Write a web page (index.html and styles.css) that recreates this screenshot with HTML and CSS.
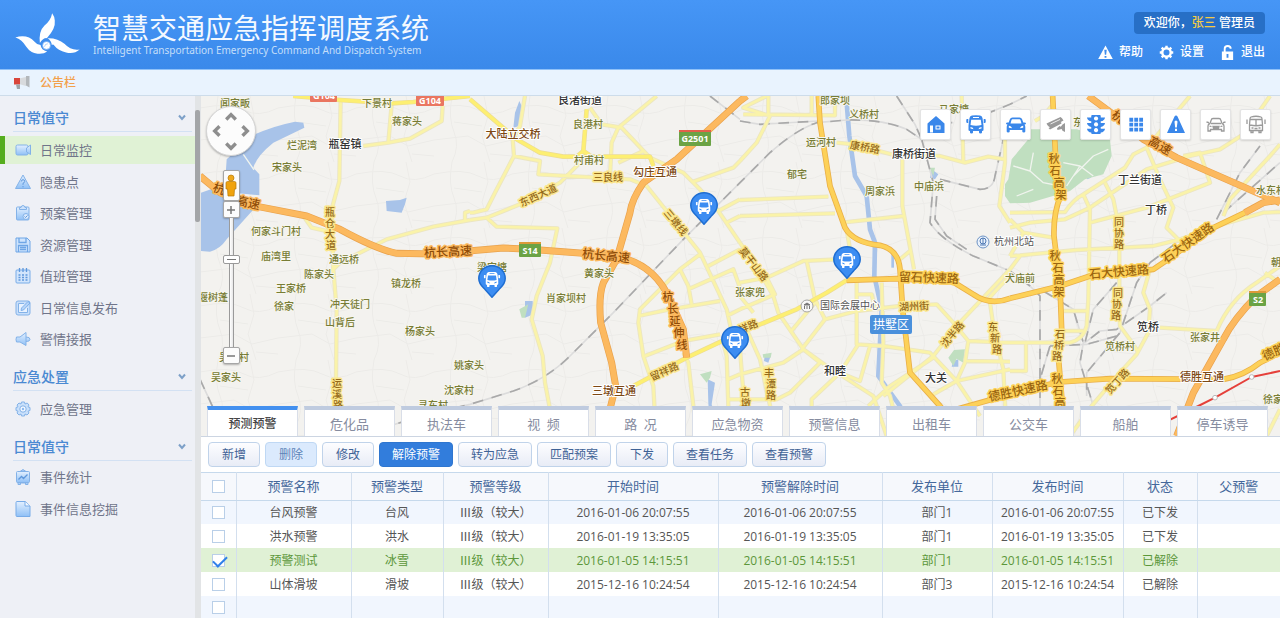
FILE: index.html
```html
<!DOCTYPE html>
<html lang="zh-CN">
<head>
<meta charset="utf-8">
<meta name="viewport" content="width=device-width, initial-scale=1">
<title>智慧交通应急指挥调度系统</title>
<link rel="stylesheet" href="styles.css">
</head>
<body>
<svg class="sprite" aria-hidden="true">
  <defs>
    <linearGradient id="blueFill" x1="0" y1="0" x2="0" y2="1"><stop offset="0" stop-color="#e3f0ff"/><stop offset="1" stop-color="#8fc0f6"/></linearGradient>
    <symbol id="bus" viewBox="0 0 20 18"><path fill-rule="evenodd" d="M6 0Q10-.5 14 0q2 .3 2.500 2.500L17.500 10v4.500q0 1-1.500 1V17q0 1-1.500 1T13 17v-1.500H7V17q0 1-1.500 1T4 17v-1.500q-1.500 0-1.500-1V10l1-7.500Q4 .3 6 0zM7 1.500v1h6v-1zM5.200 4.200L4.500 9.500Q10 10.800 15.500 9.500l-.7-5.300zM4.500 11.500v1.500l3 .7q0-1.700-3-2.200zM15.500 11.500v1.500l-3 .7q0-1.700 3-2.200zM1 3.500h1.300v4H1.500Q.300 7.500.300 6.500V4.500Q.300 3.500 1 3.500zM19 3.500h-1.300v4h.8q1.200 0 1.200-1V4.500q0-1-.7-1z"/></symbol>
    <symbol id="car" viewBox="0 0 20 18"><path fill-rule="evenodd" d="M6.500 2h7q2 0 2.600 1.800L17.300 7h1.200q1.500 0 1.500 1t-1.500 1q.8 1 .8 2.500V16q0 1-1.500 1T16.300 16v-1.500H3.700V16q0 1-1.500 1T.700 16v-4.500Q.700 10 1.500 9 0 9 0 8t1.500-1h1.200l1.200-3.200Q4.500 2 6.500 2zM6.500 3.700q-.8 0-1 .8L4.500 8h11l-1-3.500q-.2-.8-1-.8zM2.800 10.300v2l3 .5q0-2-3-2.500zM17.200 10.300v2l-3 .5q0-2 3-2.500z"/></symbol>
    <symbol id="chevron" viewBox="0 0 8 7"><path d="M1 1.500L4 5l3-3.500" fill="none" stroke="#7da0c8" stroke-width="2"/></symbol>
    <symbol id="pin" viewBox="0 0 28 33">
      <path d="M14 .8C6.500.8.800 6.500.800 13.500c0 6 4.200 8.500 6.700 11.500L14 32.300l6.500-7.300c2.500-3 6.700-5.500 6.700-11.500C27.200 6.500 21.500.800 14 .800z" fill="#3c8df2" stroke="#1f6ed2" stroke-width="1.500"/>
      <use href="#bus" x="5" y="7" width="18" height="15" fill="#fff"/>
    </symbol>
  </defs>
</svg>
<div class="app">
  <header class="topbar">
    <svg class="logo" viewBox="45 35 196 128" aria-hidden="true">
      <g fill="#fff"><path d="M157 38Q153 60 134 75Q116 92 120 128Q130 112 141 113Q168 85 165 60Q164 47 157 38z"/><path d="M46 111Q82 100 104 124Q112 134 122 134Q124 150 142 153Q132 162 113 160Q92 158 79 139Q66 117 46 111z"/><path d="M143 113Q174 112 194 130Q215 152 240 147Q223 162 199 156Q174 150 164 136Q159 129 156 134Q155 120 143 113z"/></g>
      <circle cx="140" cy="135" r="12" fill="#fff" stroke="#5fa3f5" stroke-width="2"/><path d="M134 139q1-9 10-9" fill="none" stroke="#8fbdf8" stroke-width="2"/>
    </svg>
    <div class="brand">
      <h1>智慧交通应急指挥调度系统</h1>
      <p>Intelligent Transportation Emergency Command And Dispatch System</p>
    </div>
    <div class="account">
      <div class="welcome">欢迎你，<b>张三</b> 管理员</div>
      <nav class="quick">
        <a href="#"><svg viewBox="0 0 16 16"><path fill="#fff" fill-rule="evenodd" d="M8 .5L15.800 15H.200zM6.700 5l.6 5.500h1.400L9.300 5zM7 11.700v1.800h2v-1.800z"/></svg>帮助</a>
        <a href="#"><svg viewBox="0 0 16 16"><circle cx="8" cy="8" r="4.500" fill="none" stroke="#fff" stroke-width="2.600"/><path d="M8 .8v3M8 12.200v3M.800 8h3M12.200 8h3M2.900 2.900l2 2M11.100 11.100l2 2M2.900 13.100l2-2M11.100 4.900l2-2" stroke="#fff" stroke-width="2.600"/></svg>设置</a>
        <a href="#"><svg viewBox="0 0 16 16"><path d="M5 8V4q0-3 3.200-3t3.200 3" fill="none" stroke="#fff" stroke-width="2"/><path fill="#fff" fill-rule="evenodd" d="M2 7h12v9H2zM7 9.500v4h2v-4z"/></svg>退出</a>
      </nav>
    </div>
  </header>
  <div class="notice">
    <svg viewBox="0 0 16 14" aria-hidden="true"><path d="M5 2.500L12 1v9L5 8z" fill="#d8dadd"/><path d="M0 2h6v6.500H0z" fill="#d9453b"/><path d="M12 0h3.500v11.500L12 9.500z" fill="#b3b7bb"/><path d="M2 8.500h4V13H3z" fill="#9fa4a9"/></svg>
    <span>公告栏</span>
  </div>
  <div class="body">
    <aside class="sidebar">
      <section>
        <h2>日常值守<svg><use href="#chevron"/></svg></h2>
        <ul class="menu menu-long">
          <li><a class="active" href="#"><svg viewBox="0 0 16 16"><g fill="url(#blueFill)" stroke="#83b2e8"><rect x="1" y="3" width="12" height="10" rx="1.500"/><path d="M11.500 6L15.500 3v9.500L11.500 10z"/></g></svg>日常监控</a></li>
          <li><a href="#"><svg viewBox="0 0 16 16"><path d="M8 1L15.500 14.500H.500z" fill="url(#blueFill)" stroke="#83b2e8"/><path d="M6.300 7.500q.2-1.800 1.800-1.800T9.700 7.500Q9.500 8.800 8 9.300v1.500M8 12v1.300" fill="none" stroke="#5f98dc"/></svg>隐患点</a></li>
          <li><a href="#"><svg viewBox="0 0 16 16"><g stroke="#83b2e8"><rect x="1.500" y="2" width="12.500" height="13" rx="1" fill="url(#blueFill)"/><path d="M4.500 4.500V2.500H6q.3-2 2-2t2 2h1.500v2z" fill="#cde2fc"/><circle cx="11" cy="11.500" r="3" fill="#d8e9fd"/></g><path d="M9.500 11.500l1 1 2-2" fill="none" stroke="#5f98dc"/></svg>预案管理</a></li>
          <li><a href="#"><svg viewBox="0 0 16 16"><path d="M1 1h11l3 3v11H1z" fill="#cfe4fd" stroke="#6fa6e6"/><path d="M4 1v4.500h7V1M3.500 15V8.500h9V15M5 10.500h6M5 12.500h6" fill="none" stroke="#6fa6e6" stroke-width="1.300"/></svg>资源管理</a></li>
          <li><a href="#"><svg viewBox="0 0 16 16"><rect x="1" y="2" width="14" height="13" rx="1" fill="#d2e5fc" stroke="#78ace8"/><path d="M4.500 0v4M8 0v4M11.500 0v4M3.500 7h2M7 7h2M10.500 7h2M3.500 9.500h2M7 9.500h2M10.500 9.500h2M3.500 12h2M7 12h2M10.500 12h2" stroke="#5f98dc" stroke-width="1.300"/></svg>值班管理</a></li>
          <li><a href="#"><svg viewBox="0 0 16 16"><rect x="1" y="1" width="14" height="14" rx="2" fill="#c8dffb" stroke="#83b2e8"/><path d="M9 3.500H3.500v9h9V8" fill="#e8f2ff" stroke="#83b2e8"/><path d="M6 10.500l.5-2.500L13 1.500l2 1.500-6.500 7z" fill="#b5d4f9" stroke="#6fa6e6" stroke-width=".8"/></svg>日常信息发布</a></li>
          <li><a href="#"><svg viewBox="0 0 16 16"><path d="M1.500 6H5l6-4.500V14.500L5 11H1.500Q.500 8.500 1.500 6zM11 6q4 0 4 2.300T11 10.500" fill="url(#blueFill)" stroke="#83b2e8"/></svg>警情接报</a></li>
        </ul>
      </section>
      <section>
        <h2>应急处置<svg><use href="#chevron"/></svg></h2>
        <ul class="menu">
          <li><a href="#"><svg viewBox="0 0 16 16"><path d="M6.500 1h3l.5 2 2.200-1 1.800 2-1 1.800 2 .7v3l-2 .7 1 1.800-2 2-2-1-.5 2h-3L6 13l-2 1-2-2 1-1.800L1 9.500v-3l2-.7L2 4l2-2 2 1z" fill="#c9e0fb" stroke="#83b2e8"/><circle cx="8" cy="8" r="3.200" fill="#f1f7ff" stroke="#83b2e8"/><circle cx="8" cy="8" r="1.200" fill="#8dbaf0"/></svg>应急管理</a></li>
        </ul>
      </section>
      <section>
        <h2>日常值守<svg><use href="#chevron"/></svg></h2>
        <ul class="menu menu-last">
          <li><a href="#"><svg viewBox="0 0 16 16"><path d="M5 2.500L8 .5l3 2M3 13v2.500h2.500V14h5v1.500H13V13" fill="#a9cdf7" stroke="#83b2e8"/><rect x="1.500" y="2.500" width="13" height="11" rx="1" fill="url(#blueFill)" stroke="#83b2e8"/><path d="M3.500 10.500l3-3 2 2 4-4" fill="none" stroke="#5f98dc" stroke-width="1.300"/></svg>事件统计</a></li>
          <li><a href="#"><svg viewBox="0 0 16 16"><path d="M2 .500h8.500L15 5v10.500H2q-1 0-1-1v-13q0-1 1-1z" fill="url(#blueFill)" stroke="#78ace8"/><path d="M10 .5V5h5" fill="#f3f8ff" stroke="#78ace8"/></svg>事件信息挖掘</a></li>
        </ul>
      </section>
      <span class="scroll-thumb"></span>
    </aside>
    <main class="main">
      <div class="map-area">
        <svg class="map" viewBox="1 0 1079 341" preserveAspectRatio="xMinYMin slice" role="img" aria-label="杭州地图">
          <defs>
            <pattern id="lanes" width="78" height="66" patternUnits="userSpaceOnUse"><path d="M0 12Q30 6 44 14T78 12M18 0Q14 22 20 36T18 66M0 44L34 40L52 50L78 44M50 0L54 20L48 40L56 66M20 26L48 30M56 58L78 60" fill="none" stroke="#ecebe8" stroke-width="1"/></pattern>
            <g id="minor">
              <path d="M422 10L418 255L395 340L400 520L410 640L408 850L415 1020M575 25L565 140L630 128L725 75L728 30M490 150L565 140M395 525L420 500L560 430L700 392L810 372M310 360L335 395L400 410M795 372V350L810 345"/>
              <path transform="translate(810 0)" d="M165 0L150 90L128 130L132 180L210 195L205 235L480 250L530 270L590 345L690 470L770 640L790 730M132 180L75 290L50 340L10 350H0M0 372L50 365L150 325L270 260L330 200L345 165M50 365L80 392L262 397L240 500L200 600L185 670L218 780L225 860L255 1020M560 0L445 95L425 140L420 240M360 35L395 85L455 95L540 185L640 230L690 280L745 345L810 440M445 200L520 165M670 257L790 215L810 195M745 345L810 310M770 380L810 360M690 475L630 520L510 640L505 680L520 780L550 870L558 1020M505 660L600 640L750 615M630 520L655 570L665 625M655 580L790 520L810 575M715 510L810 460M525 780L640 735L750 715M640 770L655 800L670 930L680 1020M760 740L770 780L778 1020M775 850L810 835M775 910H810M770 660L810 640"/>
              <path transform="translate(1620 0)" d="M0 195L50 140L90 60L10 35L80 0M10 55L285 58V0M85 55V0M215 0V55M0 312L265 302M0 360L285 352M305 380L490 360M290 140L340 145L455 175L600 180L675 200L745 182L795 190M487 190V330L515 480L522 520M665 0L670 200M795 60V200L778 330L810 380M320 400L330 460M0 560L80 545L190 495L290 490M0 440L60 530L100 600L115 650L190 760L260 810L400 900L440 1020M200 495L225 610L255 670L350 645L480 630L590 625L640 680L685 735L675 800L650 855M80 545L105 595L0 640M0 600L40 650M350 555V745L430 750L570 770L650 855L720 960M0 835L130 800L190 760M150 710L225 620M185 760L255 670M425 560L430 740L425 860L450 900L480 1020M350 595H395L405 640M430 900L580 780L650 690L810 520M215 1020V910L300 830L355 745M385 930L450 870L580 785M685 735L810 740M680 795L810 797M580 895L650 855L810 820M750 620L760 690L790 820L800 1020M745 610Q760 590 810 540M0 910H110L150 890L240 800L190 760M20 700L60 790L110 1020M0 760L20 1020M480 490L510 465M300 830L360 855L390 750"/>
              <path transform="translate(2430 0)" d="M0 350L165 348Q190 310 220 295L345 215L370 175L410 155M0 395L60 380L165 370L240 335L410 220L540 180L630 160L700 115L780 0M240 380L410 335L600 260L570 170L520 180M410 155L450 250L490 335L470 395L515 440M410 155L540 0M285 260L310 310L328 400V640L330 690L370 745L385 770M220 295L240 340L235 610L230 690Q220 730 180 740L0 740M0 480L30 478L200 462L430 450L510 430L600 400M0 370L40 410L130 425M40 410L0 480M0 520L30 480M420 520L400 590L420 640L415 710L380 775L330 830L245 930L180 1020M155 645H230M155 705H220M450 695L620 705Q660 610 740 560L810 510M765 530L800 555M0 825H48V745M515 440L620 390L760 350L810 348M640 360L660 310L780 180L810 145M75 75L100 60L125 30M770 1020L810 940"/>
            </g>
            <g id="major">
              <path d="M280 0L420 12L575 22L640 18L810 0M810 10L950 130L1020 170L1090 182H1350L1360 210M1160 40L1150 165L1175 182M1150 165L1130 182M1300 870L1460 785L1620 710L1790 640L1880 590L1940 553"/>
            </g>
            <g id="express">
              <path transform="translate(1620 0)" d="M235 0L240 80L270 270L315 395Q340 440 420 448Q475 460 480 520L488 640L510 830L600 930L670 1020M320 553L470 548L640 558L700 595Q750 630 810 607M650 940L810 895"/>
              <path transform="translate(2430 0)" d="M0 607L150 570L240 540L430 520L460 500L600 400L705 350M128 0L140 250L152 300Q130 350 132 420L150 570L155 700L145 780L155 900L165 1020M0 890L150 858L300 848L640 850Q700 840 750 800L810 770"/>
            </g>
            <g id="motorway">
              <path d="M0 240L60 290L140 325L320 360L420 400Q530 460 590 472L700 474L910 456L990 460L1150 472L1250 482Q1350 500 1400 590L1450 700L1460 785M1620 15L1430 190L1330 260Q1295 310 1290 350L1250 490L1210 560Q1195 600 1202 680L1235 800L1247 870L1210 1020M1620 15L1640 0"/>
              <path transform="translate(2430 0)" d="M235 0L330 70L400 130L500 185L740 290L810 320M705 350L760 320L810 312M810 550L740 600Q670 670 640 730L550 890L500 1020"/>
            </g>
            <g id="rail">
              <path d="M0 850L60 980M540 1000L660 960L810 925L940 885Q1040 850 1110 780L1240 650L1450 430L1620 260L1710 170Q1790 100 1850 80L1940 72Q2050 70 2120 100L2165 130L2200 260L2190 380Q2220 430 2320 480L2430 525L2490 570L2520 600V930M1620 75L1680 85L1855 75M2090 0L2145 85L2165 130M2165 80H2260M2220 250L2340 280Q2380 280 2385 240L2410 130M2210 300L2205 370L2240 420L2300 460M1530 0L1620 70M2355 55L2430 25L2480 0"/>
              <path transform="translate(2430 0)" d="M100 585L190 640L220 740L210 800L250 930L280 1020M320 560L250 640L225 740L270 705L320 700L420 630L470 590M420 500L380 560L350 650L330 710L230 830V900M420 500L500 440M620 370L690 230L750 150M640 350L810 200M120 750L230 745L320 720M120 750L90 850"/>
            </g>
          </defs>
          <rect x="0" width="1080" height="341" fill="#f3f2ef"/>
          <rect x="0" width="1080" height="341" fill="url(#lanes)"/>
          <g transform="scale(.33333)">
            <g class="water"><path d="M313 95L310 80L285 77Q220 90 165 115L80 190L75 265L3 290V465L30 467Q60 460 80 430L165 335L100 290L178 298V235L160 215Q170 180 220 140zM558 315L600 312L620 305L615 325L605 350L560 345zM958 15L945 50L940 95L958 90L965 30zM975 615L998 615L1000 655L975 665zM1523 850L1545 860L1535 925L1550 1000H1530L1525 920zM1695 775L1712 780L1705 800L1692 795zM2260 795L2275 790V812H2255zM2195 220L2215 235L2205 250L2190 245zM2655 228L2668 225L2673 245L2662 250z"/></g>
            <g class="park"><path d="M2485 100L2630 100L2730 130L2735 180L2710 235L2655 250L2610 285L2490 320L2430 322L2415 300V265L2425 250L2435 190L2485 130zM958 640L985 625L975 665L965 665zM1500 835L1535 825L1530 845L1520 860zM2245 785L2262 762L2295 760L2290 800L2270 788L2260 810zM1688 775L1715 770L1712 785L1690 785zM2188 215L2205 215L2200 240z"/></g>
            <path class="trails" d="M2440 210L2490 225L2530 260L2580 270M2490 225L2500 170M2580 110L2560 160M2620 240L2680 180L2725 160M2600 270L2640 210M2450 300L2500 280M2590 200L2640 210L2680 240M130 175L162 222"/>
            <path class="river" d="M1940 20L1948 120L1965 240L2000 300L2010 400L2025 440L2023 540L2045 640L2035 840L2100 930L2130 1020"/><path class="creek" d="M2078 470V515"/>
            <use class="rail-base" href="#rail"/><use class="rail-dash" href="#rail"/>
            <use class="minor-case" href="#minor"/><use class="minor-fill" href="#minor"/>
            <use class="major-case" href="#major"/><use class="major-fill" href="#major"/>
            <use class="express-case" href="#express"/><use class="express-fill" href="#express"/>
            <use class="motorway-case" href="#motorway"/><use class="motorway-fill" href="#motorway"/>
            <path class="metro" d="M2830 1010L2995 930L3045 905L3155 843L3240 825"/>
            <g class="metro-stop"><circle cx="3045" cy="905" r="7"/><circle cx="3155" cy="843" r="7"/></g>
          </g>
          <g class="village">
            <text x="35" y="11">闻家畈</text><text x="177" y="11">下景村</text><text x="207" y="29">蒋家头</text><text x="102" y="53">烂泥湾</text><text x="87" y="75">宋家头</text><text x="76" y="139">何家斗门村</text><text x="76" y="164">庙湾里</text><text x="144" y="167">通远桥</text><text x="119" y="182">陈家头</text><text x="91" y="196">王家桥</text><text x="206" y="191">镇龙桥</text><text x="84" y="214">徐家</text><text x="150" y="212">冲天徒门</text><text x="140" y="230">山背后</text><text x="220" y="239">杨家头</text><text x="13" y="205">堰树蓬</text><text x="269" y="273">姚家头</text><text x="259" y="298">沈家村</text><text x="26" y="285">吴家头</text><text x="34" y="265">吴家村</text><text x="233" y="313">寻东村</text>
            <text x="388" y="32">良港村</text><text x="389" y="68">村甫村</text><text x="399" y="181">黄家头</text><text x="366" y="206">肖家坝村</text><text x="292" y="175">梁家塘</text>
            <text x="635" y="8">郎家坝</text><text x="664" y="22">义桥村</text><text x="621" y="50">运河村</text><text x="597" y="82">郁宅</text><text x="680" y="99">周家浜</text><text x="729" y="94">中庙浜</text><text x="550" y="200">张家兜</text><text x="754" y="17">马家塘</text><text x="820" y="186">犬庙前</text>
            <text x="1071" y="98">水东村</text><text x="1005" y="245">张家井</text><text x="920" y="254">笕桥村</text><text x="1073" y="307">徐家</text><text x="1076" y="170">朝</text><text x="878" y="30">东</text>
          </g>
          <g class="town">
            <text x="145" y="52">瓶窑镇</text><text x="380" y="8">良渚街道</text><text x="714" y="62">康桥街道</text><text x="940" y="88">丁兰街道</text><text x="956" y="118">丁桥</text><text x="948" y="235">笕桥</text><text x="635" y="279">和睦</text><text x="736" y="286">大关</text>
          </g>
          <g class="poi"><text x="814" y="149">杭州北站</text><text x="650" y="213">国际会展中心</text></g>
          <g class="junction"><text x="313" y="42">大陆立交桥</text><text x="455" y="80">勾庄互通</text><text x="414" y="299">三墩互通</text><text x="1002" y="285">德胜互通</text></g>
          <g class="road">
            <text x="408" y="85">三良线</text><text x="338" y="103" transform="rotate(-25 338 99)">东西大道</text><text x="476" y="130" transform="rotate(50 476 126)">三墩线</text><text x="464" y="279" transform="rotate(-24 464 275)">留祥路</text><text x="554" y="172" transform="rotate(52 554 168)">莫干山路</text><text x="548" y="234" transform="rotate(-22 548 230)">祥路</text><text x="665" y="55" transform="rotate(10 665 51)">康桥路</text><text x="714" y="214" transform="rotate(-3 714 210)">湖州街</text><text x="752" y="242" transform="rotate(-50 752 238)">沈半路</text><text x="917" y="289" transform="rotate(-48 917 285)">笕丁路</text>
            <text><tspan x="130" y="120">瓶</tspan><tspan x="130" y="131">仓</tspan><tspan x="130" y="142">大</tspan><tspan x="131" y="153">道</tspan></text>
            <text><tspan x="137" y="291">运</tspan><tspan x="137" y="302">溪</tspan><tspan x="138" y="313">路</tspan></text>
            <text><tspan x="793" y="235">东</tspan><tspan x="795" y="246">新</tspan><tspan x="797" y="257">路</tspan></text>
            <text><tspan x="569" y="281">丰</tspan><tspan x="571" y="292">潭</tspan><tspan x="571" y="303">路</tspan></text>
            <text><tspan x="545" y="300">古</tspan><tspan x="546" y="311">墩</tspan></text>
            <text><tspan x="919" y="130">同</tspan><tspan x="919" y="141">协</tspan><tspan x="919" y="152">路</tspan></text>
            <text><tspan x="918" y="201">同</tspan><tspan x="917" y="212">协</tspan><tspan x="916" y="223">路</tspan></text>
            <text><tspan x="860" y="242">石</tspan><tspan x="859" y="253">桥</tspan><tspan x="857" y="264">路</tspan></text>
          </g>
          <g class="road road-express">
            <text x="729" y="186" transform="rotate(2 729 182)">留石快速路</text><text x="919" y="180" transform="rotate(-5 919 176)">石大快速路</text><text x="988" y="151" transform="rotate(-35 988 147)">石大快速路</text><text x="818" y="299" transform="rotate(-12 818 295)">德胜快速路</text><text x="1074" y="260" transform="rotate(-25 1074 256)">德胜</text>
            <g class="stacked">
              <text><tspan x="854" y="67">秋</tspan><tspan x="855" y="79">石</tspan><tspan x="859" y="91">高</tspan><tspan x="861" y="103">架</tspan></text>
              <text><tspan x="855" y="164">秋</tspan><tspan x="858" y="176">石</tspan><tspan x="859" y="188">高</tspan><tspan x="859" y="200">架</tspan></text>
              <text><tspan x="857" y="287">秋</tspan><tspan x="858" y="299">石</tspan><tspan x="860" y="311">高</tspan></text>
            </g>
          </g>
          <g class="road road-motorway">
            <text x="248" y="160" transform="rotate(-3 248 156)">杭长高速</text><text x="406" y="164" transform="rotate(6 406 160)">杭长高速</text><text x="19" y="97" transform="rotate(20 19 93)">杭</text><text x="48" y="111" transform="rotate(12 48 107)">高速</text><text x="960" y="54" transform="rotate(30 960 50)">高速</text><text x="918" y="25" transform="rotate(35 918 21)">杭</text>
            <g class="stacked"><text><tspan x="468" y="205">杭</tspan><tspan x="473" y="217">长</tspan><tspan x="475" y="229">延</tspan><tspan x="479" y="241">伸</tspan><tspan x="482" y="253">线</tspan></text></g>
          </g>
          <g class="shield">
            <rect x="110" y="-8" width="27" height="14" rx="1" fill="#ea7660"/><text x="124" y="3">G104</text>
            <rect x="216" y="-4" width="28" height="14" rx="1" fill="#ea7660"/><text x="230" y="8">G104</text>
            <rect x="479" y="34" width="32" height="16" rx="1" fill="#6ba345"/><path d="M479 34h32v2h-32z" fill="#e2604b"/><text x="495" y="46">G2501</text>
            <rect x="319" y="146" width="22" height="15" rx="1" fill="#6ba345"/><path d="M319 146h22v2h-22z" fill="#dc9a3a"/><text x="330" y="158">S14</text>
            <rect x="1049" y="195" width="17" height="15" rx="1" fill="#6ba345"/><path d="M1049 195h17v2h-17z" fill="#dc9a3a"/><text x="1058" y="207">S2</text>
          </g>
          <rect x="670" y="219" width="42" height="19" rx="2" fill="#4a90dc"/><text class="district" x="691" y="233">拱墅区</text>
          <circle cx="607" cy="210" r="6" fill="#f8f8f8" stroke="#a5a5a5"/><path d="M604 209l3-2 3 2zM604.500 213v-3M607 213v-3M609.500 213v-3" fill="#777" stroke="#777"/>
          <circle cx="783" cy="146" r="6" fill="#eaf2fc" stroke="#6d93c4"/><circle cx="783" cy="145" r="3" fill="none" stroke="#4c78b4"/><path d="M783 142v6M780 149h6" stroke="#4c78b4"/>
          <use href="#pin" x="278" y="169" width="28" height="33"/><use href="#pin" x="490" y="96" width="28" height="33"/><use href="#pin" x="633" y="150" width="28" height="33"/><use href="#pin" x="521" y="230" width="28" height="33"/>
        </svg>
        <div class="map-nav">
          <button class="pan" type="button" aria-label="平移地图"><svg viewBox="0 0 50 50"><path d="M20 13l5-5 5 5M20 38l5 5 5-5M13 20l-5 5 5 5M37 20l5 5-5 5" fill="none" stroke="#8e8e8e" stroke-width="3.500"/></svg></button>
          <button class="pegman" type="button" aria-label="街景"><svg viewBox="0 0 12 24"><circle cx="6" cy="4" r="3" fill="#f0a91c" stroke="#b87a08" stroke-width=".7"/><path d="M2.500 7.500h7q1.500 0 1.500 1.500v6H9.500l-.5 7H3l-.5-7H1V9q0-1.500 1.500-1.500z" fill="#f0a30e" stroke="#b87a08" stroke-width=".7"/></svg></button>
          <button class="zoom-in" type="button" aria-label="放大"><svg viewBox="0 0 8 8"><path d="M4 0v8M0 4h8" stroke="#777" stroke-width="1.500"/></svg></button>
          <input class="zoom-range" type="range" min="0" max="100" value="69" aria-label="缩放级别">
          <button class="zoom-out" type="button" aria-label="缩小"><svg viewBox="0 0 8 8"><path d="M0 4h8" stroke="#777" stroke-width="1.500"/></svg></button>
        </div>
        <div class="layers">
          <button type="button" aria-label="场站"><svg viewBox="0 0 20 18"><path fill-rule="evenodd" d="M10 .5L18.500 8v9.500h-17V8zM4 10v7h3v-7zM9.500 10v4h5v-4z"/><path d="M10.500 11h3v2h-3z"/></svg></button>
          <button type="button" aria-label="公交"><svg><use href="#bus"/></svg></button>
          <button type="button" aria-label="出租车"><svg><use href="#car"/></svg></button>
          <button class="off" type="button" aria-label="摄像头"><svg viewBox="0 0 20 18"><path d="M.500 8L14.500 1.500Q16 2 17.500 5L5 12Q2 11.500.500 8zM2.500 12.500L15 6.500l.5 1.500L4 14zM16.500 9l2.500-1.500V16.500l-2.500-1.200-.8-1.800-4.200 1L11 12.800l2.500-2.300 1.300.8z"/><path d="M4.500 8.500L14 4" stroke="#fff" stroke-width=".8"/></svg></button>
          <button type="button" aria-label="信号灯"><svg viewBox="0 0 20 20"><path fill-rule="evenodd" d="M5 1q0-1 1-1h8q1 0 1 1v1.500h4.500Q19 6 15 6.500V8.500h4.500Q19 12 15 12.500v2h4.500Q19 18 15 18.500v.5q0 1-1 1H6q-1 0-1-1v-.5Q1 18 .500 14.500H5v-2Q1 12 .500 8.500H5v-2Q1 6 .500 2.500H5zM10 1.500a2.200 2.200 0 1 0 .1 0zM10 7.700a2.200 2.200 0 1 0 .1 0zM10 13.800a2.200 2.200 0 1 0 .1 0z"/></svg></button>
          <button type="button" aria-label="网格"><svg viewBox="0 0 20 20"><path d="M3 3h4v4H3zM8.200 3h4v4h-4zM13.400 3h4v4h-4zM3 8.200h4v4H3zM8.200 8.200h4v4h-4zM13.400 8.200h4v4h-4zM3 13.400h4v4H3zM8.200 13.400h4v4h-4zM13.400 13.400h4v4h-4z"/></svg></button>
          <button type="button" aria-label="隐患"><svg viewBox="0 0 20 18"><path fill-rule="evenodd" d="M10 0q1 0 1.500 1L19 17.500H1L8.500 1Q9 0 10 0zM10 5Q8.300 5 8.500 6.500L9.200 12h1.600l.7-5.500Q11.700 5 10 5zM9 13.300v2.200h2v-2.200z"/></svg></button>
          <button class="off" type="button" aria-label="离线车辆"><svg viewBox="0 0 20 18"><g fill="none" stroke="#9a9a9a" stroke-width="1.300"><path d="M4 8l1.200-3.500Q5.500 3 7 3h6q1.500 0 1.800 1.500L16 8q2 .5 2 2.500V15.500h-2.500V14h-11v1.500H2v-5Q2 8.500 4 8zM5 8h10M.500 6.500l2.500.7M19.500 6.500l-2.500.7M7 11h6l-.5 1.500h-5zM3.500 10.500l2 .7M16.500 10.500l-2 .7"/></g></svg></button>
          <button class="off" type="button" aria-label="离线公交"><svg viewBox="0 0 20 18"><g fill="none" stroke="#9a9a9a" stroke-width="1.300"><path d="M5 1.500Q10 0 15 1.500q1 .5 1 2l.5 6V15h-13V9.500l.5-6q0-1.500 1-2zM4 4h12M4 9.500Q10 11 16 9.500M10 4v6M1 4v4.500M19 4v4.500M5 15v2h2v-2M13 15v2h2v-2M5.500 12.500h2M12.500 12.500h2M8.500 13h3"/></g></svg></button>
        </div>
        <div class="tabs" role="tablist">
          <button role="tab" aria-selected="true">预测预警</button><button role="tab">危化品</button><button role="tab">执法车</button><button role="tab">视&ensp;频</button><button role="tab">路&ensp;况</button><button role="tab">应急物资</button><button role="tab">预警信息</button><button role="tab">出租车</button><button role="tab">公交车</button><button role="tab">船舶</button><button role="tab">停车诱导</button>
        </div>
      </div>
      <div class="toolbar">
        <button type="button">新增</button><button class="hover" type="button">删除</button><button type="button">修改</button><button class="wide primary" type="button">解除预警</button><button class="wide" type="button">转为应急</button><button class="wide" type="button">匹配预案</button><button type="button">下发</button><button class="wide" type="button">查看任务</button><button class="wide" type="button">查看预警</button>
      </div>
      <table>
        <colgroup><col class="c-check"><col class="c-name"><col class="c-type"><col class="c-level"><col class="c-start"><col class="c-end"><col class="c-dept"><col class="c-pub"><col class="c-state"><col class="c-parent"></colgroup>
        <thead><tr><th><input type="checkbox" aria-label="全选"></th><th>预警名称</th><th>预警类型</th><th>预警等级</th><th>开始时间</th><th>预警解除时间</th><th>发布单位</th><th>发布时间</th><th>状态</th><th>父预警</th></tr></thead>
        <tbody>
          <tr><td><input type="checkbox" aria-label="台风预警"></td><td>台风预警</td><td>台风</td><td>Ⅲ级（较大）</td><td>2016-01-06 20:07:55</td><td>2016-01-06 20:07:55</td><td>部门1</td><td>2016-01-06 20:07:55</td><td>已下发</td><td></td></tr>
          <tr><td><input type="checkbox" aria-label="洪水预警"></td><td>洪水预警</td><td>洪水</td><td>Ⅲ级（较大）</td><td>2016-01-19 13:35:05</td><td>2016-01-19 13:35:05</td><td>部门1</td><td>2016-01-19 13:35:05</td><td>已下发</td><td></td></tr>
          <tr class="selected"><td><input type="checkbox" checked aria-label="预警测试"></td><td>预警测试</td><td>冰雪</td><td>Ⅲ级（较大）</td><td>2016-01-05 14:15:51</td><td>2016-01-05 14:15:51</td><td>部门1</td><td>2016-01-05 14:15:51</td><td>已解除</td><td></td></tr>
          <tr><td><input type="checkbox" aria-label="山体滑坡"></td><td>山体滑坡</td><td>滑坡</td><td>Ⅲ级（较大）</td><td>2015-12-16 10:24:54</td><td>2015-12-16 10:24:54</td><td>部门3</td><td>2015-12-16 10:24:54</td><td>已解除</td><td></td></tr>
          <tr class="spare"><td><input type="checkbox" aria-label="空行"></td><td></td><td></td><td></td><td></td><td></td><td></td><td></td><td></td><td></td></tr>
        </tbody>
      </table>
    </main>
  </div>
</div>
</body>
</html>
```
FILE: styles.css
```css
* { box-sizing: border-box; }
body {
  margin: 0;
  font-family: "Open Sans", "Noto Sans CJK SC", sans-serif;
  font-size: 12px;
  line-height: 16px;
  color: #555;
}
h1, h2, p, ul { margin: 0; padding: 0; font-weight: 400; }
ul { list-style: none; }
a { color: inherit; text-decoration: none; }
button { font: inherit; padding: 0; cursor: pointer; }
svg { display: block; flex: none; }
.sprite { position: absolute; width: 0; height: 0; }

.app { display: flex; flex-direction: column; min-height: 100vh; }

/* Header */
.topbar {
  display: flex;
  height: 70px;
  padding: 12px 15px 0;
  background: linear-gradient(#4696f6, #3a89ea);
  border-bottom: 1px solid #8fc1f8;
  color: #fff;
}
.logo { width: 65px; height: 43px; }
.brand { flex: 1; padding-left: 13px; white-space: nowrap; }
.brand h1 { font-size: 28px; line-height: 32px; color: #f4f9ff; }
.brand p { font-family: "Noto Sans", sans-serif; font-size: 10px; line-height: 12px; color: #c4def9; }
.account { display: flex; flex-direction: column; align-items: flex-end; gap: 10px; }
.welcome {
  padding: 3px 10px;
  border-radius: 4px;
  background: #276fc6;
  font-weight: 500;
  white-space: nowrap;
}
.welcome b { font-weight: 500; color: #f5cb45; }
.quick { display: flex; gap: 16px; font-weight: 500; }
.quick a { display: flex; align-items: center; gap: 6px; }
.quick svg { width: 15px; height: 15px; }

.notice {
  display: flex;
  align-items: center;
  gap: 10px;
  height: 26px;
  padding-left: 14px;
  background: #e9f3fe;
  border-bottom: 1px solid #cddcea;
  color: #f3a04b;
  font-weight: 500;
}
.notice svg { width: 16px; height: 14px; }

.body { flex: 1; display: flex; }

/* Sidebar */
.sidebar {
  position: relative;
  flex: none;
  width: 201px;
  padding: 8px 9px 0 0;
  background: #eef0f6;
  border-right: 6px solid #e2e4e6;
}
.sidebar section { margin-bottom: 10px; }
.sidebar h2 {
  display: flex;
  align-items: center;
  justify-content: space-between;
  height: 28px;
  margin: 0 -6px 4px 13px;
  padding-right: 6px;
  border-bottom: 1px solid #d3e1f3;
  font-size: 14px;
  font-weight: 500;
  color: #4a89d2;
}
.sidebar h2 svg { width: 8px; height: 7px; }
.menu { display: flex; flex-direction: column; gap: 4px; margin-right: -9px; }
.menu-long { height: 217px; gap: 0; justify-content: space-between; }
.menu-last { margin-top: -2px; }
.menu a {
  display: flex;
  align-items: center;
  gap: 9px;
  height: 28px;
  padding-left: 10px;
  border-left: 5px solid transparent;
  font-size: 13px;
  color: #70758a;
}
.menu svg { width: 16px; height: 16px; }
.menu .active { background: #e0f2d5; border-left-color: #55ad1e; }
.scroll-thumb {
  position: absolute;
  top: 14px;
  right: -5px;
  width: 5px;
  height: 112px;
  border-radius: 2px;
  background: #a3a5a8;
}

/* Map */
.main { flex: 1; min-width: 0; display: flex; flex-direction: column; background: #fff; }
.map-area { position: relative; flex: 1; min-height: 300px; overflow: hidden; border-bottom: 1px solid #ccd5e2; }
.map { position: absolute; inset: 0; width: 100%; height: 100%; }
.map use, .river, .creek, .trails, .metro { stroke-linejoin: round; }
.water { fill: #a8c3e9; }
.park { fill: #c0dfc0; }
.trails { fill: none; stroke: #f0f4ee; stroke-width: 4; }
.river { fill: none; stroke: #a8c3e9; stroke-width: 14; }
.creek { fill: none; stroke: #a8c3e9; stroke-width: 8; }
.rail-base { fill: none; stroke: #dcdcdc; stroke-width: 5; }
.rail-dash { fill: none; stroke: #a9a9a9; stroke-width: 5; stroke-dasharray: 32 26; }
.minor-case { fill: none; stroke: #ebe5c2; stroke-width: 13; }
.minor-fill { fill: none; stroke: #faf3a9; stroke-width: 8; }
.major-case { fill: none; stroke: #ecdc94; stroke-width: 14; }
.major-fill { fill: none; stroke: #fdef72; stroke-width: 10; }
.express-case { fill: none; stroke: #eab048; stroke-width: 17; }
.express-fill { fill: none; stroke: #fdd158; stroke-width: 12; }
.motorway-case { fill: none; stroke: #e9a24c; stroke-width: 21; }
.motorway-fill { fill: none; stroke: #fcb95f; stroke-width: 17; }
.metro { fill: none; stroke: #e5403a; stroke-width: 6; }
.metro-stop { fill: #fff; stroke: #b9b9b9; stroke-width: 3; }
.map text { text-anchor: middle; paint-order: stroke; stroke-linejoin: round; font-size: 10px; }
.map .village text { font-weight: 500; fill: #777c35; stroke: #f7f6ee; stroke-width: 2px; }
.map .town text { font-size: 11px; font-weight: 500; fill: #333; stroke: #fff; stroke-width: 2px; }
.map .poi text { fill: #555; stroke: #fff; stroke-width: 2px; }
.map .junction text { font-size: 11px; font-weight: 500; fill: #7d4814; stroke: #fff; stroke-width: 2px; }
.map .road text { font-weight: 500; fill: #94691a; stroke: #fbe68c; stroke-width: 3px; }
.map .road-express text { font-size: 12px; fill: #9a6510; stroke: #fdd158; }
.map .road-motorway text { font-size: 12px; fill: #8e4c08; stroke: #fcb95f; }
.map .stacked text { font-size: 11px; }
.map .shield text { font-size: 9px; font-weight: 700; fill: #fff; }
.map .district { font-size: 12px; fill: #fff; }

.map-nav {
  position: absolute;
  left: 5px;
  top: 10px;
  display: flex;
  flex-direction: column;
  align-items: center;
  width: 50px;
}
.map-nav button {
  display: flex;
  align-items: center;
  justify-content: center;
  width: 17px;
  height: 17px;
  border: 1px solid #a6a6a6;
  border-radius: 2px;
  background: #fcfcfc;
  box-shadow: 0 1px 2px #0004;
}
.map-nav .zoom-in svg, .map-nav .zoom-out svg { width: 8px; height: 8px; }
.map-nav .pan { width: 50px; height: 50px; margin-bottom: 14px; border-color: #d5d5d5; border-radius: 50%; }
.pan svg { width: 48px; height: 48px; }
.map-nav .pegman { height: 31px; }
.pegman svg { width: 12px; height: 24px; }
.zoom-range {
  appearance: none;
  writing-mode: vertical-lr;
  direction: rtl;
  width: 17px;
  height: 129px;
  margin: 0;
  background: linear-gradient(90deg, transparent 6px, #9a9a9a 6px, #9a9a9a 7px, #fff 7px, #e8e8e8 10px, #9a9a9a 10px, #9a9a9a 11px, transparent 11px);
}
.zoom-range::-webkit-slider-thumb {
  appearance: none;
  width: 17px;
  height: 9px;
  border: 1px solid #999;
  border-radius: 2px;
  background: linear-gradient(#fff 3px, #777 3px, #777 4px, #fff 4px) center / 9px 7px no-repeat #fff;
}

.layers { position: absolute; top: 13px; right: 9px; display: flex; gap: 9px; }
.layers button {
  display: flex;
  align-items: center;
  justify-content: center;
  width: 31px;
  height: 31px;
  border: 1px solid #e4e4e4;
  border-radius: 2px;
  background: #fff;
  box-shadow: 0 1px 2px #0002;
  fill: #3a87ea;
}
.layers .off { fill: #9a9a9a; }
.layers svg { width: 20px; height: 19px; }

.tabs { position: absolute; left: 6px; right: 12px; bottom: 0; display: flex; gap: 6px; }
.tabs button {
  flex: 1;
  min-width: 0;
  height: 30px;
  padding-top: 2px;
  border: 1px solid #d9dee8;
  border-top: 4px solid #bfcbdf;
  border-bottom: 0;
  background: #fff;
  font-size: 13px;
  color: #868ca0;
  white-space: nowrap;
}
.tabs [aria-selected="true"] { border-top-color: #4390ef; font-size: 12px; font-weight: 500; color: #444; }

/* Toolbar */
.toolbar { display: flex; gap: 5px; padding: 5px 7px; }
.toolbar button {
  width: 52px;
  height: 25px;
  padding-top: 1px;
  border: 1px solid #c0d3ea;
  border-radius: 4px;
  background: linear-gradient(#fdfdff, #e8ecf6);
  color: #3f6296;
}
.toolbar .wide { width: 74px; }
.toolbar .hover { background: #dbeafd; border-color: #bfd8f4; color: #5d83b8; }
.toolbar .primary { background: #327ddc; border-color: #2f76cf; color: #fff; }

/* Table */
table { width: 100%; table-layout: fixed; border-collapse: collapse; text-align: center; }
.c-check { width: 35px; }
.c-name { width: 115px; }
.c-type { width: 92px; }
.c-level { width: 105px; }
.c-start { width: 170px; }
.c-end { width: 164px; }
.c-dept { width: 110px; }
.c-pub { width: 131px; }
.c-state { width: 74px; }
.c-parent { width: 83px; }
th, td { padding: 0; border-right: 1px solid #d3dfee; white-space: nowrap; }
th:last-child, td:last-child { border-right: 0; }
th {
  height: 28px;
  border-top: 1px solid #c6d9ec;
  border-bottom: 1px solid #c6d9ec;
  background: #f6f8fc;
  font-size: 13px;
  font-weight: 400;
  color: #45689b;
}
td { height: 24px; padding-top: 1px; }
tbody tr:nth-child(odd) { background: #f1f6fe; }
tbody tr.selected { background: #e0f1d5; color: #5c973a; }
.spare td { height: 22px; }
th input, td input {
  appearance: none;
  display: block;
  width: 13px;
  height: 13px;
  margin: 0 auto;
  border: 1px solid #b9cfe8;
  background: #fff;
}
td input:checked::before {
  content: "";
  display: block;
  width: 12px;
  height: 6px;
  margin-top: 1px;
  border: solid #2f80ea;
  border-width: 0 0 2px 2px;
  transform: rotate(-45deg);
}
```
